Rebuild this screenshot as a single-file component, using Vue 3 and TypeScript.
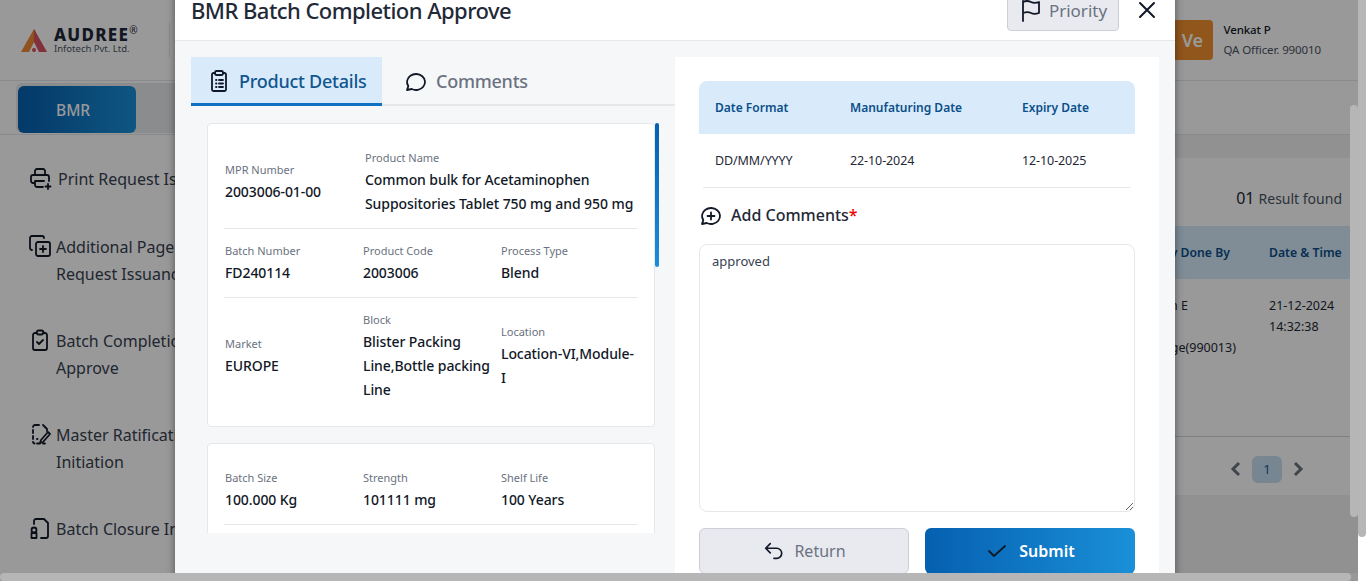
<script setup lang="ts">
const navItems = [
  { lines: ['Print Request Issuance'], icon: 'print' },
  { lines: ['Additional Page', 'Request Issuance'], icon: 'copy' },
  { lines: ['Batch Completion', 'Approve'], icon: 'check' },
  { lines: ['Master Ratification', 'Initiation'], icon: 'edit' },
  { lines: ['Batch Closure Initiation'], icon: 'cert' },
]

const firstCardRows = [
  [
    { label: 'Batch Number', value: 'FD240114' },
    { label: 'Product Code', value: '2003006' },
    { label: 'Process Type', value: 'Blend' },
  ],
  [
    { label: 'Market', value: 'EUROPE' },
    { label: 'Block', value: 'Blister Packing Line,Bottle packing Line' },
    { label: 'Location', value: 'Location-VI,Module-I' },
  ],
]

const secondCardRows = [
  [
    { label: 'Batch Size', value: '100.000 Kg' },
    { label: 'Strength', value: '101111 mg' },
    { label: 'Shelf Life', value: '100 Years' },
  ],
  [
    { label: 'Storage', value: 'Room Temp' },
    { label: 'Pack Size', value: '10 x 10' },
    { label: 'Stage', value: 'Final' },
  ],
]
</script>

<template>
  <div class="screen">
    <!-- page behind the dialog -->
    <div class="page">
      <header class="topbar">
        <div class="logo">
          <svg width="26" height="23" viewBox="0 0 26 23">
            <path d="M13 0 L0 23 H8 L13 13 L14.500 2.600 Z" fill="#f08a35" />
            <path d="M13 0 L26 23 H18 L13 13 Z" fill="#d9505f" />
            <circle cx="13" cy="21" r="2" fill="#d9505f" />
          </svg>
          <div class="logo-text">
            <div class="logo-name">AUDREE<sup>®</sup></div>
            <div class="logo-sub">Infotech Pvt. Ltd.</div>
          </div>
        </div>
        <div class="user">
          <div class="avatar">Ve</div>
          <div>
            <div class="user-name">Venkat P</div>
            <div class="user-role">QA Officer. 990010</div>
          </div>
        </div>
      </header>

      <div class="navrow">
        <div class="navtabs">
          <div class="navtab">BMR</div>
        </div>
      </div>

      <div class="columns">
        <aside class="sidebar">
          <div v-for="item in navItems" :key="item.icon" class="side-item" :class="item.icon">
            <svg class="side-icon" viewBox="0 0 24 24" width="24" height="24">
              <template v-if="item.icon === 'print'">
                <path d="M6 17H5a2 2 0 0 1-2-2v-4a2 2 0 0 1 2-2h14a2 2 0 0 1 2 2v4" />
                <path d="M17 9V5a2 2 0 0 0-2-2H9a2 2 0 0 0-2 2v4" />
                <path d="M15 21H9a2 2 0 0 1-2-2v-4h9" />
                <path d="M20 18v5M17.500 20.500h5" />
              </template>
              <template v-else-if="item.icon === 'copy'">
                <rect x="8" y="8" width="14" height="14" rx="2" />
                <path d="M15 12v6M12 15h6" />
                <path d="M4 16a2 2 0 0 1-2-2V4a2 2 0 0 1 2-2h10a2 2 0 0 1 2 2" />
              </template>
              <template v-else-if="item.icon === 'check'">
                <path d="M9 5H7a2 2 0 0 0-2 2v13a2 2 0 0 0 2 2h10a2 2 0 0 0 2-2V7a2 2 0 0 0-2-2h-2" />
                <rect x="8.500" y="2.500" width="7" height="4" rx="2" />
                <path d="M9 14l2 2 4-4" />
              </template>
              <template v-else-if="item.icon === 'edit'">
                <path d="M11 3H7a2 2 0 0 0-2 2M15 3l4 4v2M5 8v3M5 14v3M5 20a2 2 0 0 0 1.500 1.500M9 21.500h3M15 21.500h2" />
                <path d="M13 18l7-8 2 2-7 8-3 1z" />
                <path d="M9 17h.5" />
              </template>
              <template v-else>
                <path d="M6 8V5a2 2 0 0 1 2-2h8l4 4v13a2 2 0 0 1-2 2h-5" />
                <circle cx="6" cy="14" r="2.500" />
                <path d="M3.500 17h5v5h-5z" />
              </template>
            </svg>
            <div class="side-text">
              <div v-for="line in item.lines" :key="line">{{ line }}</div>
            </div>
          </div>
        </aside>

        <main class="content">
          <div class="results"><span class="count">01</span> Result found</div>
          <div class="table-head">
            <span>Activity Done By</span>
            <span>Date &amp; Time</span>
          </div>
          <div class="table-row">
            <div class="row-who">
              <div>Naveen E</div>
              <div>&nbsp;</div>
              <div>Incharge(990013)</div>
            </div>
            <div>
              <div>21-12-2024</div>
              <div>14:32:38</div>
            </div>
          </div>
          <div class="pager">
            <svg width="12" height="16" viewBox="0 0 12 16"><path d="M9 2 L3 8 L9 14" /></svg>
            <span class="page-num">1</span>
            <svg width="12" height="16" viewBox="0 0 12 16"><path d="M3 2 L9 8 L3 14" /></svg>
          </div>
        </main>
      </div>
    </div>

    <div class="backdrop"></div>

    <!-- dialog -->
    <section class="modal">
      <div class="modal-head">
        <h2 class="modal-title">BMR Batch Completion Approve</h2>
        <button class="priority">
          <svg class="icon" width="24" height="24" viewBox="0 0 24 24">
            <path d="M4 23V3M4 4c4-2 6-1 8 0s5 1 8 0v11c-3 1-6 1-8 0s-5-1-8 0" />
          </svg>
          Priority
        </button>
        <svg class="icon close" width="24" height="24" viewBox="0 0 24 24">
          <path d="M5 5l14 14M19 5L5 19" />
        </svg>
      </div>

      <div class="modal-body">
        <div class="left">
          <div class="tabs">
            <div class="tab active">
              <svg class="icon" width="24" height="24" viewBox="0 0 24 24">
                <path d="M8 4H6.500A1.500 1.500 0 0 0 5 5.500v15A1.500 1.500 0 0 0 6.500 22h11a1.500 1.500 0 0 0 1.500-1.500v-15A1.500 1.500 0 0 0 17.500 4H16" />
                <rect x="8" y="2" width="8" height="4" rx="1.500" />
                <path d="M9 11h.5M12 11h4M9 14.500h.5M12 14.500h4M9 18h.5M12 18h4" />
              </svg>
              Product Details
            </div>
            <div class="tab">
              <svg class="icon" width="24" height="24" viewBox="0 0 24 24">
                <path d="M3 21l1.300-3.900C1.976 13.663 2.874 9.228 6.400 6.726c3.526-2.501 8.590-2.296 11.845.480 3.255 2.777 3.695 7.266 1.029 10.501-2.666 3.235-7.615 4.215-11.574 2.293L3 21" />
              </svg>
              Comments
            </div>
          </div>

          <div class="scroller">
            <div class="thumb"></div>
            <div class="card">
              <div class="info-row top-row">
                <div class="field">
                  <div class="label">MPR Number</div>
                  <div class="value">2003006-01-00</div>
                </div>
                <div class="field name-field">
                  <div class="label">Product Name</div>
                  <div class="value">Common bulk for Acetaminophen Suppositories Tablet 750 mg and 950 mg</div>
                </div>
              </div>
              <div v-for="(row, i) in firstCardRows" :key="i" class="info-row">
                <div v-for="f in row" :key="f.label" class="field">
                  <div class="label">{{ f.label }}</div>
                  <div class="value">{{ f.value }}</div>
                </div>
              </div>
            </div>
            <div class="card">
              <div v-for="(row, i) in secondCardRows" :key="i" class="info-row">
                <div v-for="f in row" :key="f.label" class="field">
                  <div class="label">{{ f.label }}</div>
                  <div class="value">{{ f.value }}</div>
                </div>
              </div>
            </div>
          </div>
        </div>

        <div class="right">
          <div class="date-head">
            <span>Date Format</span>
            <span>Manufaturing Date</span>
            <span>Expiry Date</span>
          </div>
          <div class="date-row">
            <span>DD/MM/YYYY</span>
            <span>22-10-2024</span>
            <span>12-10-2025</span>
          </div>
          <div class="comment-title">
            <svg class="icon" width="24" height="24" viewBox="0 0 24 24">
              <path d="M3 21l1.300-3.900C1.976 13.663 2.874 9.228 6.400 6.726c3.526-2.501 8.590-2.296 11.845.480 3.255 2.777 3.695 7.266 1.029 10.501-2.666 3.235-7.615 4.215-11.574 2.293L3 21" />
              <path d="M8.500 13h7M12 9.500v7" />
            </svg>
            Add Comments<span class="req">*</span>
          </div>
          <textarea class="comment-box">approved</textarea>
          <div class="actions">
            <button class="btn ghost">
              <svg class="icon" width="22" height="22" viewBox="0 0 24 24">
                <path d="M9 14L4 9l5-5M4 9h12a4.500 4.500 0 0 1 0 11h-3" />
              </svg>
              Return
            </button>
            <button class="btn primary">
              <svg class="icon" width="24" height="24" viewBox="0 0 24 24">
                <path d="M4 12l5 5L20 7" />
              </svg>
              Submit
            </button>
          </div>
        </div>
      </div>
    </section>

    <!-- window scrollbars -->
    <div class="bar-inner"></div>
    <div class="bar-outer"></div>
    <div class="bar-bottom"></div>
  </div>
</template>

<style>
html,
body {
  margin: 0;
  overflow: hidden;
}
</style>

<style scoped>
.screen {
  position: relative;
  width: 1366px;
  height: 581px;
  overflow: hidden;
  background: #fff;
  font-family: 'Noto Sans', 'Liberation Sans', sans-serif;
  color: #1f2937;
}

.page {
  width: 1358px;
  height: 573px;
  background: #f0f2f0;
  display: flex;
  flex-direction: column;
}

.topbar {
  height: 81px;
  flex: none;
  box-sizing: border-box;
  background: #fff;
  border-bottom: 1px solid #e5e7eb;
  display: flex;
  align-items: center;
  justify-content: space-between;
  padding-left: 21px;
  padding-right: 37px;
}

.logo {
  display: flex;
  align-items: center;
  gap: 7px;
  height: 34px;
  width: 148px;
  border-right: 1px solid #e5e7eb;
}

.logo-name {
  font-size: 17px;
  line-height: 17px;
  font-weight: 800;
  letter-spacing: 1.300px;
  color: #1f2937;
}

.logo-name sup {
  font-size: 10px;
  line-height: 0;
  font-weight: 400;
  letter-spacing: 0;
}

.logo-sub {
  font-size: 9.500px;
  line-height: 12px;
  color: #4b5563;
}

.user {
  display: flex;
  align-items: center;
  gap: 10px;
  font-size: 11.500px;
  letter-spacing: -0.1px;
}

.avatar {
  width: 42px;
  height: 40px;
  border-radius: 4px;
  background: #f0902f;
  color: #fff;
  font-size: 18px;
  font-weight: 600;
  display: flex;
  align-items: center;
  justify-content: center;
}

.user-name {
  line-height: 20px;
  font-weight: 500;
  color: #111827;
}

.user-role {
  line-height: 20px;
  color: #4b5563;
}

.navrow {
  height: 54px;
  flex: none;
  background: #fff;
  border-bottom: 1px solid #e5e7eb;
  padding: 2px 0 0 16px;
  box-sizing: border-box;
}

.navtabs {
  height: 50px;
  border-radius: 6px;
  background: #e7e9ec;
  padding: 3px 2px;
  box-sizing: border-box;
  width: 400px;
}

.navtab {
  width: 118px;
  height: 47px;
  box-sizing: border-box;
  padding-left: 38px;
  border-radius: 6px;
  background: linear-gradient(90deg, #0560b0, #1a8fd8);
  color: #fff;
  font-size: 15.500px;
  font-weight: 500;
  display: flex;
  align-items: center;
}

.columns {
  flex: 1;
  display: flex;
  min-height: 0;
}

.sidebar {
  width: 190px;
  flex: none;
  background: #fff;
  padding-top: 31px;
  padding-left: 28px;
  box-sizing: border-box;
  display: flex;
  flex-direction: column;
  gap: 40px;
}

.side-item {
  display: flex;
  gap: 4px;
  font-size: 16px;
  line-height: 27px;
  white-space: nowrap;
  color: #374151;
}

.side-item.print {
  gap: 6px;
  margin-bottom: 1px;
}

.side-icon {
  flex: none;
  fill: none;
  stroke: #111827;
  stroke-width: 1.800;
  stroke-linecap: round;
  stroke-linejoin: round;
}

.content {
  flex: 1;
  margin-top: 23px;
  margin-right: 8px;
  height: 337px;
  background: #fff;
  display: flex;
  flex-direction: column;
  font-size: 12.500px;
  line-height: 21px;
}

.results {
  height: 68px;
  display: flex;
  align-items: center;
  justify-content: flex-end;
  gap: 4px;
  padding-right: 8px;
  padding-top: 12px;
  box-sizing: border-box;
  font-size: 14px;
  color: #4b5563;
}

.results .count {
  font-size: 16px;
  color: #1f2937;
}

.table-head {
  height: 53px;
  flex: none;
  background: #d6ebfa;
  display: grid;
  grid-template-columns: 136px 81px;
  justify-content: end;
  align-items: center;
  font-weight: 600;
  color: #0b4f8a;
  white-space: nowrap;
  font-size: 12.200px;
}

.table-row {
  height: 158px;
  flex: none;
  box-sizing: border-box;
  padding-top: 16px;
  border-bottom: 1px solid #d1d5db;
  display: grid;
  grid-template-columns: 136px 81px;
  justify-content: end;
  white-space: nowrap;
  color: #1f2937;
}

.pager {
  flex: 1;
  display: flex;
  align-items: center;
  justify-content: flex-end;
  gap: 10px;
  padding-right: 46px;
  padding-top: 6px;
}

.pager svg {
  fill: none;
  stroke: #6b7280;
  stroke-width: 3;
}

.page-num {
  width: 30px;
  height: 27px;
  border-radius: 6px;
  background: #c9e0f2;
  color: #0b5a9c;
  display: flex;
  align-items: center;
  justify-content: center;
  font-size: 13px;
}

.backdrop {
  position: absolute;
  inset: 0 8px 0 0;
  background: rgba(0, 0, 0, 0.4);
}

.modal {
  position: absolute;
  left: 175px;
  top: -14px;
  width: 1000px;
  height: 640px;
  background: #f6f7f9;
  box-shadow: 0 0 8px rgba(0, 0, 0, 0.45);
  display: flex;
  flex-direction: column;
}

.icon {
  flex: none;
  fill: none;
  stroke: #111827;
  stroke-width: 1.800;
  stroke-linecap: round;
  stroke-linejoin: round;
}

.modal-head {
  height: 55px;
  flex: none;
  box-sizing: border-box;
  background: #fff;
  border-bottom: 1px solid #e5e7eb;
  display: flex;
  align-items: center;
  padding: 0 16px 6px;
}

.modal-title {
  margin: 0 auto 0 0;
  font-size: 22px;
  font-weight: 500;
  letter-spacing: -0.55px;
  color: #1f2937;
}

.priority {
  width: 112px;
  height: 42px;
  margin-right: 16px;
  box-sizing: border-box;
  border: 1px solid #ccd0d6;
  border-radius: 4px;
  background: #e8eaef;
  color: #6b7280;
  font: inherit;
  font-size: 17px;
  display: flex;
  align-items: center;
  justify-content: center;
  gap: 6px;
}

.close {
  stroke-width: 2;
}

.modal-body {
  display: flex;
  padding: 16px 16px 0;
  flex: 1;
  min-height: 0;
}

.left {
  width: 484px;
  flex: none;
}

.tabs {
  height: 49px;
  box-sizing: border-box;
  border-bottom: 2px solid #e5e7eb;
  display: flex;
}

.tab {
  display: flex;
  align-items: center;
  gap: 8px;
  padding: 0 14px 0 22px;
  height: 48px;
  box-sizing: border-box;
  font-size: 18px;
  font-weight: 500;
  letter-spacing: -0.25px;
  white-space: nowrap;
  color: #6b7280;
}

.tab.active {
  height: 49px;
  padding-left: 16px;
  padding-top: 2px;
  background: #d9ebfa;
  border-bottom: 3px solid #0f70c2;
  color: #11568f;
  width: 191px;
}

.scroller {
  position: relative;
  margin: 17px 16px 0 16px;
  padding-right: 4px;
  height: 410px;
  overflow: hidden;
}

.thumb {
  position: absolute;
  top: 0;
  right: 0;
  width: 4px;
  height: 144px;
  border-radius: 2px;
  background: linear-gradient(180deg, #0560b0, #1a8fd8);
}

.card {
  background: #fff;
  border: 1px solid #e5e7eb;
  border-radius: 4px;
  padding: 12px 16px;
  margin-bottom: 16px;
}

.info-row {
  display: grid;
  grid-template-columns: repeat(3, 138px);
  align-items: center;
  padding: 12px 0 12px 1px;
  border-bottom: 1px solid #e5e7eb;
}

.card .info-row:last-child {
  border-bottom: 0;
}

.top-row {
  grid-template-columns: 140px 1fr;
}

.field {
  min-width: 0;
  padding-right: 2px;
}

.label {
  font-size: 11px;
  line-height: 20px;
  color: #6b7280;
}

.value {
  font-size: 14px;
  line-height: 24px;
  font-weight: 500;
  letter-spacing: -0.08px;
  color: #111827;
}

.right {
  width: 484px;
  flex: none;
  background: #fff;
  padding: 24px;
  box-sizing: border-box;
  display: flex;
  flex-direction: column;
}

.date-head,
.date-row {
  display: grid;
  grid-template-columns: 135px 172px 1fr;
  align-items: center;
  height: 53px;
  flex: none;
  box-sizing: border-box;
  padding-left: 16px;
  font-size: 12.500px;
}

.date-head {
  background: #d9ebfa;
  border-radius: 8px 8px 0 0;
  font-size: 12px;
  font-weight: 600;
  color: #0b4f8a;
}

.date-row {
  height: 54px;
  margin: 0 5px 0 4px;
  padding-left: 12px;
  border-bottom: 1px solid #e5e7eb;
  letter-spacing: -0.1px;
  color: #1f2937;
}

.comment-title {
  display: flex;
  align-items: center;
  gap: 8px;
  height: 24px;
  margin-top: 15px;
  font-size: 16px;
  font-weight: 500;
  color: #1f2937;
}

.req {
  color: #ef0000;
  margin-left: -8px;
}

.comment-box {
  display: block;
  height: 268px;
  margin-top: 17px;
  box-sizing: border-box;
  border: 1px solid #e5e7eb;
  border-radius: 8px;
  padding: 7px 12px;
  font: inherit;
  font-size: 13px;
  line-height: 18px;
  color: #374151;
  outline: none;
  flex: none;
}

.actions {
  display: grid;
  grid-template-columns: 210px 210px;
  gap: 16px;
  margin-top: 16px;
}

.btn {
  height: 46px;
  box-sizing: border-box;
  border-radius: 6px;
  font: inherit;
  font-size: 16px;
  display: flex;
  align-items: center;
  justify-content: center;
  gap: 10px;
}

.ghost {
  background: #e8eaef;
  border: 1px solid #ccd0d6;
  color: #6b7280;
}

.primary {
  background: linear-gradient(90deg, #0560b0, #1a8fd8);
  border: 0;
  color: #fff;
  font-weight: 600;
}

.bar-inner {
  position: absolute;
  right: 8px;
  top: 105px;
  width: 8px;
  height: 412px;
  border-radius: 4px;
  background: #b5b6b5;
}

.bar-outer {
  position: absolute;
  right: 0;
  top: 0;
  width: 8px;
  height: 537px;
  border-radius: 0 0 4px 4px;
  background: #b5b6b5;
}

.bar-bottom {
  position: absolute;
  left: 0;
  bottom: 0;
  width: 1351px;
  height: 8px;
  border-radius: 4px;
  background: #b5b6b5;
}
</style>
